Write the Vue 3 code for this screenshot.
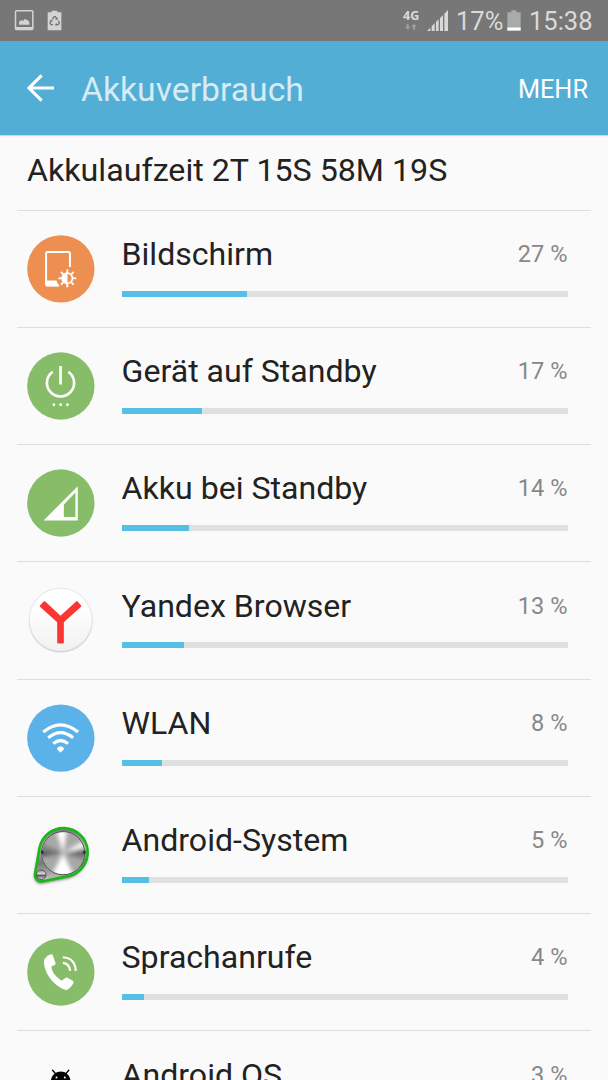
<script setup>
const items = [
  { name: 'Bildschirm', percent: 27, icon: 'screen', box: '51 43.5 204 204' },
  { name: 'Gerät auf Standby', percent: 17, icon: 'power', box: '51 35 204 204' },
  { name: 'Akku bei Standby', percent: 14, icon: 'signal', box: '51 27 204 204' },
  { name: 'Yandex Browser', percent: 13, icon: 'yandex', box: '51 34 204 204' },
  { name: 'WLAN', percent: 8, icon: 'wifi', box: '51 25.5 204 204' },
  { name: 'Android-System', percent: 5, icon: 'system', box: '51 32 204 204' },
  { name: 'Sprachanrufe', percent: 4, icon: 'call', box: '51 39 204 204' },
  { name: 'Android OS', percent: 3, icon: 'android', box: '51 106 204 204' },
]
const rays = [0, 45, 90, 135, 180, 225, 270, 315]
</script>

<template>
  <div class="screen">
    <div class="status">
      <svg class="st-left" viewBox="0 0 200 120">
        <rect x="46.500" y="32.500" width="52" height="56" rx="3" fill="none" stroke="#d3d3d3" stroke-width="4.500" />
        <path d="M47 81h51v8H47z M57 74V66l7-6 5 3 6-7 6 5 2-1 5 6v8z" fill="#d3d3d3" />
        <path d="M143 37h12v-5h17v5h12v54h-41z" fill="#d3d3d3" />
        <g fill="none" stroke="#777" stroke-width="4">
          <path d="M157 58l5-8h4l5 8M175 62l3 7-3 5h-8M159 74h-6l-3-5 4-8" />
          <path d="M166 58h6v-6M170 69l-4 5 4 4M150 62l5-2 2 5" stroke-width="2.500" />
        </g>
      </svg>
      <div class="st-right">
        <div class="net">
          <span>4G</span>
          <svg viewBox="0 0 36 22"><path d="M5 2h6v9h5l-8 9-8-9h5z M24 20h6V11h5l-8-9-8 9h5z" fill="#a0a0a0" /></svg>
        </div>
        <svg class="bars" viewBox="0 0 63 63">
          <path d="M0 63l10-10v10z M14 63V49l9-9v23z M27 63V36l8-8v35z M39 63V24l9-9v48z M52 63V11L63 0v63z" fill="#d8d8d8" />
        </svg>
        <span class="st-text pct">17%</span>
        <svg class="batt" viewBox="0 0 42 62">
          <path d="M1 6h12V0h15v6h13v56H1z" fill="#a8abab" />
          <path d="M1 52h40v9H1z" fill="#fff" />
        </svg>
        <span class="st-text time">15:38</span>
      </div>
    </div>

    <header class="bar">
      <svg class="back" viewBox="0 0 84 84"><path d="M81 42H6M44 4L6 42l38 38" fill="none" stroke="#fff" stroke-width="9.500" /></svg>
      <h1>Akkuverbrauch</h1>
      <span class="more">MEHR</span>
    </header>

    <div class="summary"><span>Akkulaufzeit 2T 15S 58M 19S</span></div>

    <div v-for="item in items" :key="item.name" class="row">
      <svg class="icon" :viewBox="item.box">
        <g v-if="item.icon === 'screen'">
          <circle cx="153" cy="145.500" r="101.500" fill="#ee8f52" />
          <path d="M180.500 140V100q0-5-5-5h-62q-5 0-5 5v91q0 5 5 5h34" fill="none" stroke="#fff" stroke-width="6" />
          <path d="M107 181h33q2 10 9 17h-37q-5 0-5-5z" fill="#fff" />
          <path v-for="r in rays" :key="r" d="M172.500 158v-11" stroke="#fff" stroke-width="5.500" :transform="`rotate(${r} 172.500 174)`" />
          <circle cx="172.500" cy="174" r="15.500" fill="none" stroke="#fff" stroke-width="5" />
          <path d="M173 158a16 16 0 0 0 0 32z" fill="#fff" />
        </g>
        <g v-else-if="item.icon === 'power'">
          <circle cx="153" cy="137.500" r="101.500" fill="#87bd69" />
          <path d="M128.500 94.500a41 41 0 1 0 47 0M152 77v56" fill="none" stroke="#fff" stroke-width="8" />
          <g fill="#fff">
            <circle cx="132" cy="194" r="4.300" />
            <circle cx="152.500" cy="194" r="4.300" />
            <circle cx="173" cy="194" r="4.300" />
          </g>
        </g>
        <g v-else-if="item.icon === 'signal'">
          <circle cx="153" cy="129.500" r="101.500" fill="#87bd69" />
          <path d="M101 182L204 79v103zM162 134v38h35V98z" fill="#fff" fill-rule="evenodd" />
        </g>
        <g v-else-if="item.icon === 'yandex'">
          <defs>
            <linearGradient id="disc" x1="0" y1="0" x2="0" y2="1">
              <stop offset="0.300" stop-color="#fff" />
              <stop offset="1" stop-color="#f1f1f1" />
            </linearGradient>
          </defs>
          <circle cx="152.500" cy="136" r="97" fill="#ececec" />
          <circle cx="152.500" cy="135" r="96" fill="#d2d2d2" />
          <circle cx="152.500" cy="132" r="96" fill="#e6e6e6" />
          <circle cx="152.500" cy="132.500" r="93.500" fill="url(#disc)" />
          <path d="M90 90l12-13q2-1 4 1l46 43 47-43q2-2 4-1l11 13q1 2-1 4l-51 46v61q0 3-3 3h-14q-3 0-3-3v-61L91 94q-2-2-1-4z" fill="#fb3434" />
        </g>
        <g v-else-if="item.icon === 'wifi'">
          <circle cx="153" cy="128.500" r="101.500" fill="#5ab2e8" />
          <path d="M100 110q52-43 105 0M115 127q37-31 75 0M130 145q22-19 45 0" fill="none" stroke="#fff" stroke-width="9.500" />
          <path d="M142 158q10-10 20 0c2 5-6 10-10 14-4-4-12-9-10-14z" fill="#fff" />
        </g>
        <g v-else-if="item.icon === 'system'">
          <defs>
            <linearGradient id="plate" x1="0" y1="0" x2="0" y2="1">
              <stop offset="0" stop-color="#777" />
              <stop offset="0.350" stop-color="#bbb" />
              <stop offset="0.650" stop-color="#777" />
              <stop offset="1" stop-color="#ccc" />
            </linearGradient>
            <linearGradient id="small" x1="0" y1="0" x2="0" y2="1">
              <stop offset="0" stop-color="#888" />
              <stop offset="0.400" stop-color="#ddd" />
              <stop offset="0.550" stop-color="#555" />
              <stop offset="1" stop-color="#ddd" />
            </linearGradient>
            <clipPath id="knob"><circle cx="160" cy="129" r="63" /></clipPath>
            <filter id="soft" x="-20%" y="-20%" width="140%" height="140%"><feGaussianBlur stdDeviation="5" /></filter>
            <filter id="brush" x="-20%" y="-20%" width="140%" height="140%"><feGaussianBlur stdDeviation="6" /></filter>
          </defs>
          <path d="M89 113.500A73 73 0 1 1 175.600 198L99 213.600A20 20 0 0 1 75.300 190.400z" fill="#777" filter="url(#soft)" transform="translate(-2 7)" />
          <path d="M89 113.500A73 73 0 1 1 175.600 198L99 213.600A20 20 0 0 1 75.300 190.400z" fill="url(#plate)" stroke="#16b916" stroke-width="8" stroke-linejoin="round" />
          <circle cx="160" cy="129" r="65" fill="#aaa" stroke="#555" stroke-width="3" />
          <g clip-path="url(#knob)">
            <path d="M90 60h145v140H90z" fill="#a8a8a8" />
            <g filter="url(#brush)">
              <path d="M160 129L135 50h38zM160 129L120 205h76zM160 129L232 85v24z" fill="#fff" />
              <path d="M160 129L85 95v35zM160 129L240 125v30z" fill="#808080" />
              <path d="M160 129L88 126v12zM160 129L236 119v10z" fill="#333" />
            </g>
          </g>
          <ellipse cx="97" cy="126" rx="4" ry="6" fill="#333" />
          <ellipse cx="224" cy="126" rx="4" ry="6" fill="#333" />
          <circle cx="94" cy="194" r="14.500" fill="url(#small)" stroke="#555" stroke-width="3" />
        </g>
        <g v-else-if="item.icon === 'call'">
          <circle cx="153" cy="141.500" r="101.500" fill="#87bd69" />
          <path d="M104 102q7-10 18-14 5-1 7 4l8 22q1 5-4 7l-9 4q2 23 31 43l10-7q4-4 8-2l16 9q5 3 1 9-7 13-17 18-8 2-20-5-48-32-51-79-1-5 2-9z" fill="#fff" />
          <path d="M159 97q37 2 39 41M159 114q20 2 22 24" fill="none" stroke="#fff" stroke-width="6.500" />
        </g>
        <g v-else>
          <path d="M122 185q2-24 21-31 10-2 20 0 18 7 20 31v90h-61z" fill="#000" />
          <path d="M128 149l8 9M177 149l-8 9" stroke="#000" stroke-width="4" stroke-linecap="round" />
          <circle cx="140" cy="171" r="3" fill="#fafafa" />
          <circle cx="165" cy="171" r="3" fill="#fafafa" />
        </g>
      </svg>
      <div class="body">
        <div class="line">
          <span class="name">{{ item.name }}</span>
          <span class="value">{{ item.percent }} %</span>
        </div>
        <div class="track"><div class="fill" :style="{ width: item.percent + 1.1 + '%' }"></div></div>
      </div>
    </div>
  </div>
</template>

<style>
body {
  background: #fafafa;
}
</style>

<style scoped>
.screen {
  width: 608px;
  height: 1080px;
  overflow: hidden;
  background: #fafafa;
  font-family: Roboto, sans-serif;
  color: #222;
}
.status {
  height: 40.500px;
  display: flex;
  justify-content: space-between;
  background: #777;
  color: #dadada;
}
.st-left {
  width: 66.700px;
  height: 40px;
}
.st-right {
  display: flex;
  padding-right: 15px;
}
.net {
  width: 18px;
  margin-right: 6px;
  padding-top: 9px;
  font: bold 12.500px/14px "Open Sans", sans-serif;
}
.net span {
  display: block;
}
.net svg {
  display: block;
  width: 12px;
  height: 7.300px;
  margin-left: 2px;
}
.bars {
  width: 21px;
  height: 21px;
  margin: 10px 8px 0 0;
}
.st-text {
  font-size: 25.500px;
  line-height: 43px;
  white-space: nowrap;
}
.pct {
  width: 48px;
}
.batt {
  width: 14px;
  height: 21px;
  margin: 10px 8px 0 3px;
}
.time {
  width: 64px;
}
.bar {
  height: 94.500px;
  box-sizing: border-box;
  display: flex;
  align-items: center;
  padding: 0 20px 0 27px;
  background: #52aed5;
  box-shadow: 0 1px 1px rgba(0, 0, 0, 0.15);
}
.back {
  width: 28px;
  height: 28px;
}
h1 {
  flex: 1;
  margin: 5px 0 0 26px;
  font-size: 33.700px;
  line-height: 40px;
  font-weight: 400;
  color: #d5ebf5;
}
.more {
  margin-top: 4px;
  font-size: 25.300px;
  line-height: 32px;
  color: #fff;
}
.summary {
  height: 74.600px;
  box-sizing: border-box;
  padding: 15px 0 0 27px;
  font-size: 32.200px;
  line-height: 40px;
  white-space: nowrap;
}
.row {
  height: 117.250px;
  box-sizing: border-box;
  display: flex;
  margin: 0 17px;
  border-top: 1px solid #dedede;
  padding: 24.200px 23.500px 0 10px;
}
.icon {
  width: 67.700px;
  height: 67.700px;
  flex: none;
  overflow: visible;
}
.body {
  flex: 1;
  margin-left: 26.900px;
}
.line {
  height: 55.800px;
  display: flex;
  justify-content: space-between;
}
.name {
  font-size: 32.100px;
  line-height: 38.500px;
}
.value {
  font-size: 23.600px;
  line-height: 38px;
  color: #888;
}
.track {
  height: 6px;
  background: #e0e0e0;
}
.fill {
  height: 6px;
  background: #55bfe6;
}
</style>
